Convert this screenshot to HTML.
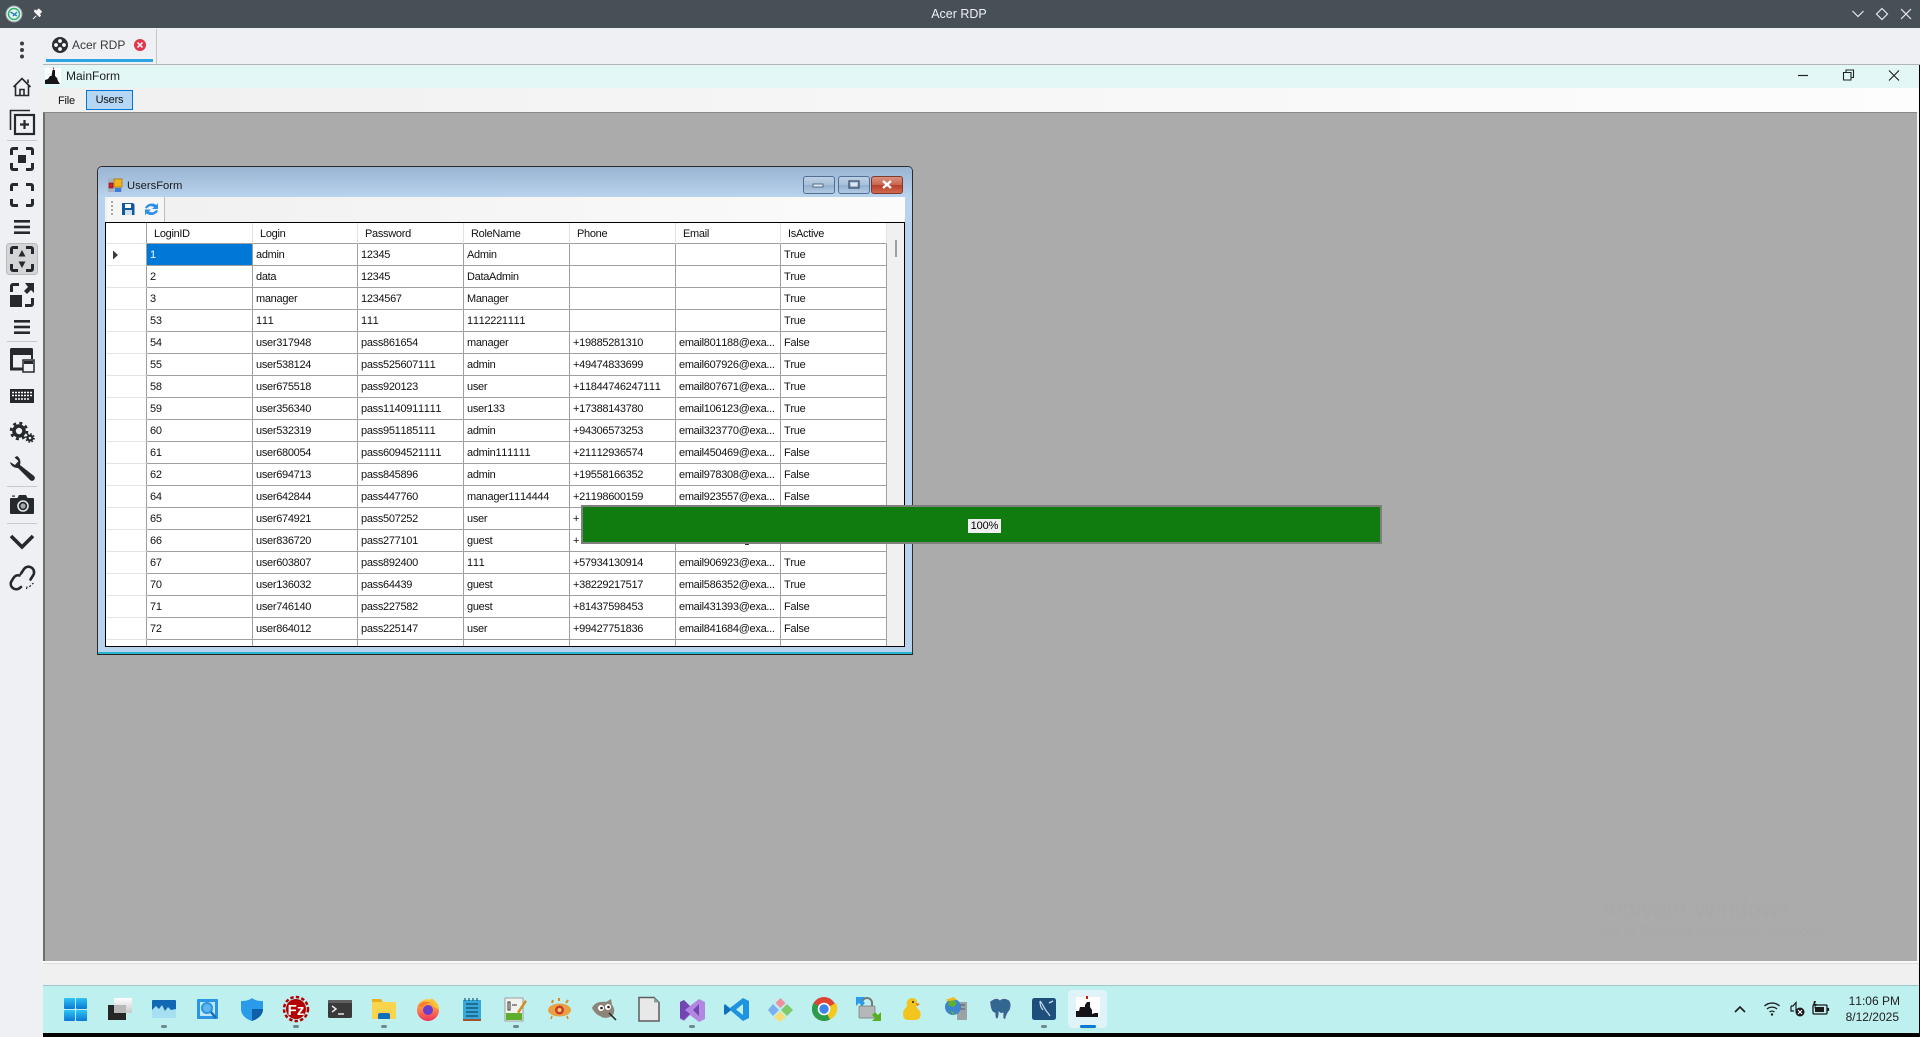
<!DOCTYPE html>
<html lang="en">
<head>
<meta charset="utf-8">
<title>Acer RDP</title>
<style>
html,body{margin:0;padding:0;width:1920px;height:1037px;overflow:hidden;background:#eef0f3;font-family:"Liberation Sans",sans-serif;color:#111;font-kerning:none}
.a{position:absolute;box-sizing:border-box}
table{border-collapse:separate;border-spacing:0;table-layout:fixed;width:781px;font-size:11px;letter-spacing:-.3px}
td,th{box-sizing:border-box;height:22px;padding:2px 0 0 3px;line-height:19px;border-right:1px solid #a0a0a0;border-bottom:1px solid #a0a0a0;font-weight:normal;text-align:left;white-space:nowrap;overflow:hidden;background:#fff;color:#111}
td:first-child,th:first-child{border-bottom:1px solid #e4e4e4;padding:0}
th{height:21px;line-height:18px;border-right:1px solid #e2e2e2;padding-left:7px}
th:first-child{border-right:1px solid #a0a0a0}
td.s{background:#0078d7;color:#fff}
td.f{height:8px}
</style>
</head>
<body>
<!-- title bar -->
<div class="a" style="left:0;top:0;width:1920px;height:28px;background:#474f57"></div>
<div class="a" style="left:859px;top:6px;width:200px;height:16px;text-align:center;color:#eef0f2;font-size:12.5px;line-height:16px">Acer RDP</div>

<!-- tab strip -->
<div class="a" style="left:43px;top:28px;width:1877px;height:36px;background:#eef0f3"></div>
<div class="a" style="left:156px;top:29px;width:1px;height:35px;background:#c4c6c8"></div>
<div class="a" style="left:46px;top:59px;width:107px;height:3px;background:#2ea4e4"></div>
<div class="a" style="left:72px;top:37px;font-size:12px;line-height:16px;color:#3a3a3a">Acer RDP</div>
<div class="a" style="left:43px;top:64px;width:1877px;height:1px;background:#b4b4b4"></div>

<!-- MainForm caption -->
<div class="a" style="left:43px;top:65px;width:1876px;height:23px;background:#e2f7f6"></div>
<div class="a" style="left:66px;top:69px;font-size:12px;line-height:15px;color:#222">MainForm</div>

<!-- menu -->
<div class="a" style="left:43px;top:88px;width:1876px;height:24px;background:linear-gradient(90deg,#f0f0f0,#fdfdfd)"></div>
<div class="a" style="left:58px;top:94px;font-size:11px;letter-spacing:-.2px;line-height:14px">File</div>
<div class="a" style="left:86px;top:90px;width:47px;height:20px;background:#b5d7f3;border:1px solid #0078d7;font-size:11px;letter-spacing:-.2px;line-height:19px;text-align:center">Users</div>

<!-- MDI client -->
<div class="a" style="left:43px;top:112px;width:1874px;height:849px;background:#ababab;border-left:2px solid #6e6e6e;border-top:1px solid #8a8a8a"></div>
<div class="a" style="left:1917px;top:112px;width:2px;height:851px;background:#f4f4f4"></div>
<div class="a" style="left:1601px;top:895px;font-size:24px;line-height:30px;color:#a9a9a9">Activate Windows</div>
<div class="a" style="left:1601px;top:923px;font-size:14.5px;line-height:18px;color:#a9a9a9">Go to Settings to activate Windows.</div>
<div class="a" style="left:43px;top:961px;width:1876px;height:2px;background:#fafafa"></div>
<div class="a" style="left:43px;top:963px;width:1876px;height:22px;background:#f0f0f0;border-top:1px solid #dcdcdc"></div>

<!-- UsersForm window -->
<div class="a" style="left:97px;top:166px;width:816px;height:489px;background:#b9d3ee;border:1px solid #2c2c2c;border-bottom-color:#222;border-radius:5px 5px 0 0;overflow:hidden">
  <div class="a" style="left:0;top:0;width:814px;height:30px;background:linear-gradient(180deg,#99b4d1,#b9d3ee)"></div>
  <div class="a" style="left:0;bottom:0;width:814px;height:2px;background:#27b4cc"></div>
</div>
<div class="a" style="left:127px;top:179px;font-size:11.2px;line-height:14px;color:#1a1a1a">UsersForm</div>
<!-- caption buttons -->
<div class="a" style="left:803px;top:176px;width:32px;height:18px;border:1px solid #4f6f94;border-radius:3px;background:linear-gradient(180deg,#bdd0e5 0,#a8c0da 50%,#93b0cf 51%,#b3cbe4 100%)"></div>
<div class="a" style="left:838px;top:176px;width:32px;height:18px;border:1px solid #4f6f94;border-radius:3px;background:linear-gradient(180deg,#bdd0e5 0,#a8c0da 50%,#93b0cf 51%,#b3cbe4 100%)"></div>
<div class="a" style="left:871px;top:176px;width:32px;height:18px;border:1px solid #80392c;border-radius:3px;background:linear-gradient(180deg,#d9917f 0,#c9654f 50%,#b73e28 51%,#cf6a4e 100%)"></div>
<!-- toolbar -->
<div class="a" style="left:105px;top:197px;width:800px;height:25px;background:linear-gradient(90deg,#f0f0f0,#fbfbfb)"></div>
<div class="a" style="left:107px;top:197px;width:58px;height:25px;background:#f6f6f6;border-radius:4px 0 0 0;border-right:1px solid #bcbcbc"></div>

<!-- grid -->
<div class="a" style="left:105px;top:222px;width:800px;height:425px;border:1px solid #000;background:#f0f0f0;overflow:hidden">
<table>
<colgroup><col style="width:41px"><col style="width:106px"><col style="width:105px"><col style="width:106px"><col style="width:106px"><col style="width:106px"><col style="width:105px"><col style="width:106px"></colgroup>
<tr><th></th><th>LoginID</th><th>Login</th><th>Password</th><th>RoleName</th><th>Phone</th><th>Email</th><th>IsActive</th></tr>
<tr><td></td><td class="s">1</td><td>admin</td><td>12345</td><td>Admin</td><td></td><td></td><td>True</td></tr>
<tr><td></td><td>2</td><td>data</td><td>12345</td><td>DataAdmin</td><td></td><td></td><td>True</td></tr>
<tr><td></td><td>3</td><td>manager</td><td>1234567</td><td>Manager</td><td></td><td></td><td>True</td></tr>
<tr><td></td><td>53</td><td>111</td><td>111</td><td>1112221111</td><td></td><td></td><td>True</td></tr>
<tr><td></td><td>54</td><td>user317948</td><td>pass861654</td><td>manager</td><td>+19885281310</td><td>email801188@exa...</td><td>False</td></tr>
<tr><td></td><td>55</td><td>user538124</td><td>pass525607111</td><td>admin</td><td>+49474833699</td><td>email607926@exa...</td><td>True</td></tr>
<tr><td></td><td>58</td><td>user675518</td><td>pass920123</td><td>user</td><td>+11844746247111</td><td>email807671@exa...</td><td>True</td></tr>
<tr><td></td><td>59</td><td>user356340</td><td>pass1140911111</td><td>user133</td><td>+17388143780</td><td>email106123@exa...</td><td>True</td></tr>
<tr><td></td><td>60</td><td>user532319</td><td>pass951185111</td><td>admin</td><td>+94306573253</td><td>email323770@exa...</td><td>True</td></tr>
<tr><td></td><td>61</td><td>user680054</td><td>pass6094521111</td><td>admin111111</td><td>+21112936574</td><td>email450469@exa...</td><td>False</td></tr>
<tr><td></td><td>62</td><td>user694713</td><td>pass845896</td><td>admin</td><td>+19558166352</td><td>email978308@exa...</td><td>False</td></tr>
<tr><td></td><td>64</td><td>user642844</td><td>pass447760</td><td>manager1114444</td><td>+21198600159</td><td>email923557@exa...</td><td>False</td></tr>
<tr><td></td><td>65</td><td>user674921</td><td>pass507252</td><td>user</td><td>+</td><td></td><td></td></tr>
<tr><td></td><td>66</td><td>user836720</td><td>pass277101</td><td>guest</td><td>+</td><td></td><td></td></tr>
<tr><td></td><td>67</td><td>user603807</td><td>pass892400</td><td>111</td><td>+57934130914</td><td>email906923@exa...</td><td>True</td></tr>
<tr><td></td><td>70</td><td>user136032</td><td>pass64439</td><td>guest</td><td>+38229217517</td><td>email586352@exa...</td><td>True</td></tr>
<tr><td></td><td>71</td><td>user746140</td><td>pass227582</td><td>guest</td><td>+81437598453</td><td>email431393@exa...</td><td>False</td></tr>
<tr><td></td><td>72</td><td>user864012</td><td>pass225147</td><td>user</td><td>+99427751836</td><td>email841684@exa...</td><td>False</td></tr>
<tr><td class="f"></td><td class="f"></td><td class="f"></td><td class="f"></td><td class="f"></td><td class="f"></td><td class="f"></td><td class="f"></td></tr>
</table>
</div>
<div class="a" style="left:895px;top:240px;width:2px;height:17px;background:#a0a0a0"></div>

<!-- progress bar -->
<div class="a" style="left:745px;top:544px;width:4px;height:1px;background:#333"></div>
<div class="a" style="left:581px;top:505px;width:801px;height:39px;background:#107c10;border:2px solid #7e807e"></div>
<div class="a" style="left:968px;top:519px;width:33px;height:14px;background:#f0f0f0;font-size:11px;letter-spacing:-.1px;line-height:15px;text-align:center;color:#000">100%</div>

<!-- taskbar -->
<div class="a" style="left:43px;top:985px;width:1876px;height:48px;background:#bdf0ef;border-top:1px solid #9fc6c6"></div>
<div class="a" style="left:43px;top:1033px;width:1877px;height:4px;background:#000"></div>
<div class="a" style="left:1919px;top:65px;width:1px;height:972px;background:#000"></div>
<div class="a" style="left:1068px;top:990px;width:39px;height:38px;background:#e0f3f8;border-radius:4px"></div>
<div class="a" style="left:1080px;top:1025px;width:16px;height:3px;background:#0078d4;border-radius:2px"></div>
<div class="a" style="left:161px;top:1025px;width:6px;height:3px;background:#6f8a8c;border-radius:2px"></div>
<div class="a" style="left:293px;top:1025px;width:6px;height:3px;background:#6f8a8c;border-radius:2px"></div>
<div class="a" style="left:381px;top:1025px;width:6px;height:3px;background:#6f8a8c;border-radius:2px"></div>
<div class="a" style="left:513px;top:1025px;width:6px;height:3px;background:#6f8a8c;border-radius:2px"></div>
<div class="a" style="left:689px;top:1025px;width:6px;height:3px;background:#6f8a8c;border-radius:2px"></div>
<div class="a" style="left:1041px;top:1025px;width:6px;height:3px;background:#6f8a8c;border-radius:2px"></div>
<div class="a" style="left:1801px;top:993px;width:99px;height:16px;text-align:right;font-size:12px;line-height:16px;color:#222">11:06 PM</div>
<div class="a" style="left:1800px;top:1009px;width:99px;height:16px;text-align:right;font-size:12px;line-height:16px;color:#222">8/12/2025</div>

<!-- all icons -->
<svg class="a" style="left:0;top:0" width="1920" height="1037" viewBox="0 0 1920 1037">
<defs>
<linearGradient id="st" x1="0" y1="0" x2="0" y2="1"><stop offset="0" stop-color="#2fc4f6"/><stop offset="1" stop-color="#0a78d4"/></linearGradient>
<linearGradient id="tv" x1="0" y1="0" x2="0" y2="1"><stop offset="0" stop-color="#fff"/><stop offset="1" stop-color="#c9c9c9"/></linearGradient>
<linearGradient id="ff" x1="0" y1="0" x2="0" y2="1"><stop offset="0" stop-color="#ffcf3a"/><stop offset="1" stop-color="#f22f5c"/></linearGradient>
</defs>

<!-- titlebar app icon + pin -->
<circle cx="14" cy="14" r="8" fill="#e8f2f4" stroke="#9aa3aa"/>
<circle cx="14" cy="14" r="5.5" fill="none" stroke="#2fb36a" stroke-width="1.5"/>
<path d="M10.5 12 17 16M17 12l-4 4" stroke="#2a7fc4" stroke-width="1.4" fill="none"/>
<path d="M33 19l3.2-3.2M34.5 11.5l5 5 1-1-1.2-1.2 2.2-2.6-2.7-2.7-2.6 2.2-1.2-1.2z" fill="#f2f3f4" stroke="#f2f3f4" stroke-width="1"/>

<!-- window controls -->
<path d="M1852.5 11l5.5 5.5 5.5-5.5" fill="none" stroke="#e8eaec" stroke-width="1.2"/>
<path d="M1882 8.5l5.5 5.5-5.5 5.5-5.5-5.5z" fill="none" stroke="#e8eaec" stroke-width="1.2"/>
<path d="M1901 9l10 10M1911 9l-10 10" fill="none" stroke="#e8eaec" stroke-width="1.2"/>
<path d="M1798 75.5h10" stroke="#222" stroke-width="1.2"/>
<path d="M1843.5 72.5h7.5v7.5h-7.5z M1846 72.5v-2.5h7.5v7.5h-2.5" fill="none" stroke="#222" stroke-width="1.1"/>
<path d="M1889 70.5l10 10M1899 70.5l-10 10" fill="none" stroke="#222" stroke-width="1.2"/>

<!-- tab icon + close -->
<circle cx="60" cy="45" r="8" fill="#2b2f33"/>
<circle cx="60" cy="41" r="1.9" fill="#fff"/><circle cx="60" cy="49" r="1.9" fill="#fff"/><circle cx="56" cy="45" r="1.9" fill="#fff"/><circle cx="64" cy="45" r="1.9" fill="#fff"/>
<circle cx="140" cy="45" r="6" fill="#e0364c"/>
<path d="M137.5 42.5l5 5M142.5 42.5l-5 5" stroke="#fff" stroke-width="1.5"/>

<!-- MainForm icon -->
<rect x="45" y="68" width="16" height="16" fill="#fff"/>
<path d="M45 84v-4l3-1 2-3h1.500l1-6h2.500v6l2 2 1 3 2 3z" fill="#16161a"/><rect x="53" y="67.5" width="1" height="2" fill="#d01818"/>

<!-- sidebar -->
<g fill="none" stroke="#25292d">
<g fill="#3a3f44" stroke="none"><circle cx="22" cy="43.5" r="2"/><circle cx="22" cy="50" r="2"/><circle cx="22" cy="56.5" r="2"/></g>
<path d="M13.500 87L22 78.500 30.500 87M15.500 85.500V95.500H28.500V85.500M20 95.500V89.500H24V95.500M28 79.500V83" stroke-width="1.600"/>
<path d="M10.500 130V110.500H30" stroke-width="1.600"/>
<rect x="15" y="115" width="19" height="19" stroke-width="2.200"/>
<path d="M24.500 120v9M20 124.500h9" stroke-width="2.200"/>
<path d="M7 140.500h30M7 341.500h30M7 486.500h30M7 523.500h30" stroke="#c6c8ca" stroke-width="1"/>
<path d="M11.500 155v-5a1.500 1.500 0 0 1 1.500-1.500h5M26 148.500h5a1.500 1.500 0 0 1 1.500 1.500v5M32.500 163v5a1.500 1.500 0 0 1-1.500 1.500h-5M18 169.500h-5a1.500 1.500 0 0 1-1.500-1.500v-5" stroke-width="3"/>
<rect x="18" y="155" width="8" height="8" fill="#25292d" stroke="none"/>
<path d="M11.500 191v-5a1.500 1.500 0 0 1 1.500-1.500h5M26 184.500h5a1.500 1.500 0 0 1 1.500 1.500v5M32.500 199v5a1.500 1.500 0 0 1-1.500 1.500h-5M18 205.500h-5a1.500 1.500 0 0 1-1.500-1.500v-5" stroke-width="3"/>
<g fill="#25292d" stroke="none"><rect x="14" y="220" width="16" height="2.600"/><rect x="14" y="225.700" width="16" height="2.600"/><rect x="14" y="231.400" width="16" height="2.600"/></g>
<rect x="6.500" y="243.500" width="31" height="31" rx="3" fill="#d4d5d7" stroke="#b9babc"/>
<path d="M11.500 254v-5a1.500 1.500 0 0 1 1.500-1.500h5M26 247.500h5a1.500 1.500 0 0 1 1.500 1.500v5M32.500 264v5a1.500 1.500 0 0 1-1.500 1.500h-5M18 270.500h-5a1.500 1.500 0 0 1-1.500-1.500v-5" stroke-width="3"/>
<path d="M22 250l3.500 6.500h-7zM22 268l3.500-6.500h-7z" fill="#25292d" stroke="none"/>
<path d="M11.500 292v-6a1.500 1.500 0 0 1 1.500-1.500h6M32.500 298v6a1.500 1.500 0 0 1-1.500 1.500h-6" stroke-width="3"/>
<rect x="10" y="295" width="12" height="12" fill="#25292d" stroke="none"/>
<path d="M34 283v10l-3-3-4 4-3-3 4-4-3-4z" fill="#25292d" stroke="none"/>
<g fill="#25292d" stroke="none"><rect x="14" y="320" width="16" height="2.600"/><rect x="14" y="325.700" width="16" height="2.600"/><rect x="14" y="331.400" width="16" height="2.600"/></g>
<path d="M11.500 354v15h11" stroke-width="3"/><rect x="10" y="348" width="23" height="7" rx="1.500" fill="#25292d" stroke="none"/><path d="M32 353v6" stroke-width="2"/>
<rect x="23" y="360" width="11" height="12" fill="#f0f1f3" stroke="#25292d" stroke-width="1.500"/><rect x="24" y="361" width="9" height="3" fill="#25292d" stroke="none"/>
<rect x="10" y="389" width="24" height="14" fill="#25292d" stroke="none"/>
<path d="M12 392.500h20M12 395.500h20M15 399h14" stroke="#fff" stroke-width="1.600" stroke-dasharray="2 1"/>
<circle cx="19" cy="431" r="5" stroke-width="3.600"/>
<circle cx="19" cy="431" r="8" stroke-width="2.600" stroke-dasharray="3 3.300"/>
<circle cx="30" cy="438" r="2.400" stroke-width="2.200"/>
<circle cx="30" cy="438" r="4" stroke-width="1.600" stroke-dasharray="1.600 1.550"/>
<path d="M17 456a7.500 7.500 0 0 1 3 9L34 476a2.600 2.600 0 0 1-4 4L18 468a7.500 7.500 0 0 1-8-6l5 3 3.500-4-4-3.500z" fill="#25292d" stroke="none"/>
<rect x="10" y="498" width="24" height="16" rx="1" fill="#25292d" stroke="none"/>
<path d="M17 499l2-4h7l2 4z" fill="#25292d" stroke="none"/><rect x="12" y="495.500" width="3" height="1.200" fill="#25292d" stroke="none"/>
<circle cx="23" cy="506" r="5" stroke="#e4e6e8" stroke-width="1.600"/><circle cx="23" cy="506" r="2.600" fill="#a5a8ab" stroke="none"/>
<path d="M11 536l11 11 11-11" stroke-width="3.600"/>
<path d="M21 573.500l3-4.500a5.500 5.500 0 0 1 9 6.500l-2.500 4M21 587l-2 1.500a5.500 5.500 0 0 1-8-6.500l2.500-4a5 5 0 0 1 6-2.500" stroke-width="2.600" stroke-linecap="round"/>
<path d="M26.500 589l.6-2.500M29.500 587l1.200-1.800M32 584l1.500-.8" stroke-width="1.200"/>
</g>

<!-- form icon and captions -->
<rect x="108" y="178" width="14" height="14" fill="#a6b2c0"/>
<rect x="114" y="179" width="8" height="8" fill="#f0b31a" stroke="#a97c10" stroke-width=".8"/>
<rect x="109" y="183" width="4" height="5" fill="#d42020" stroke="#801010" stroke-width=".6"/>
<rect x="115" y="188" width="6" height="4" fill="#3a7de0"/>
<rect x="813" y="184" width="10" height="3" fill="#dfe8f1" stroke="#3e5573" stroke-width=".8"/>
<rect x="849" y="181" width="10" height="7" fill="none" stroke="#32475f" stroke-width="1.200"/><rect x="851" y="183" width="6" height="3" fill="#dfe8f1"/>
<path d="M883 181l8 7M891 181l-8 7" stroke="#fff" stroke-width="2.400"/>

<!-- toolbar icons -->
<g fill="#aaa"><rect x="111" y="201" width="2" height="2"/><rect x="111" y="205" width="2" height="2"/><rect x="111" y="209" width="2" height="2"/><rect x="111" y="213" width="2" height="2"/></g>
<path d="M122 203h11l1.500 1.500V215H122z" fill="#125a9c"/><rect x="125" y="204" width="6" height="4" fill="#fff"/><rect x="125" y="210" width="7" height="5" fill="#cfe0ee"/>
<path d="M145 208a7 6 0 0 1 11.500-3l1.500-2v6h-6l2-1.800a4.500 4 0 0 0-7 1.300z" fill="#2c8fe8"/>
<path d="M158 210.500a7 6 0 0 1-11.500 3l-1.500 2v-6h6l-2 1.800a4.500 4 0 0 0 7-1.300z" fill="#2c8fe8"/>
<!-- row marker -->
<path d="M113 250.500l5 4.500-5 4.500z" fill="#3a3a3a"/>

<!-- taskbar icons -->
<g fill="url(#st)"><rect x="64" y="998" width="11" height="11" rx="1"/><rect x="76" y="998" width="11" height="11" rx="1"/><rect x="64" y="1010" width="11" height="11" rx="1"/><rect x="76" y="1010" width="11" height="11" rx="1"/></g>
<rect x="114" y="998" width="18" height="15" fill="url(#tv)"/><rect x="108" y="1005" width="18" height="15" fill="#262626"/><rect x="114" y="1005" width="12" height="8" fill="#b8b8b8"/>
<rect x="152" y="1000" width="24" height="18" rx="1" fill="#1169b4"/><path d="M152 1010l4-4 3 3 3-4 3 6 3-4 3 3 5-1v9h-24z" fill="#a7dff2"/>
<rect x="197" y="999" width="21" height="20" rx="1" fill="#2a95e2"/><rect x="200" y="1002" width="15" height="14" fill="#bfe6f5"/><circle cx="207" cy="1008" r="5" fill="#5fb6ea" stroke="#2a95e2" stroke-width="2"/><path d="M211 1012l5 6" stroke="#1a6fb4" stroke-width="2.500"/>
<path d="M252 998c3 2.500 7 3 11 3v8c0 6-5 10-11 12-6-2-11-6-11-12v-8c4 0 8-.5 11-3z" fill="#2a9be8"/><path d="M252 1009h11c0 6-5 10-11 12z" fill="#0f5fa8"/>
<circle cx="296" cy="1009" r="10" fill="#b30000"/><circle cx="296" cy="1009" r="12" fill="none" stroke="#b30000" stroke-width="2.500" stroke-dasharray="3.400 2.200"/>
<text x="296" y="1015" text-anchor="middle" font-family="Liberation Sans,sans-serif" font-size="15" font-weight="700" fill="#fff">Fz</text>
<rect x="328" y="1000" width="24" height="18" rx="1.500" fill="#3a3a3a"/><rect x="328" y="1000" width="24" height="3" fill="#5f5f5f"/><path d="M332 1006l4 3-4 3" fill="none" stroke="#e6e6e6" stroke-width="1.500"/><path d="M338 1014h6" stroke="#e6e6e6" stroke-width="1.500"/>
<path d="M372 999h9l2 3h13v17h-24z" fill="#e8b21c"/><rect x="372" y="1002" width="24" height="17" fill="#fbd44e"/><path d="M378 1019v-4a2 2 0 0 1 2-2h8a2 2 0 0 1 2 2v4z" fill="#0f6fbd"/>
<circle cx="428" cy="1010" r="11" fill="url(#ff)"/><path d="M431 998c5 3 8 7 8 12l-6-4z" fill="#ffc233"/><circle cx="428" cy="1010" r="5" fill="#6a3cc8"/><path d="M418 1006c4-5 9-5 13-3-4 0-7 1-8 4z" fill="#ff7a2a"/>
<rect x="463" y="1000" width="18" height="20" fill="#38a8d8"/><path d="M466 1004h12M466 1008h12M466 1012h12M466 1016h12" stroke="#14587c" stroke-width="1.400"/><rect x="463" y="1019" width="18" height="2" fill="#a5532a"/><path d="M465 998v3M469 998v3M473 998v3M477 998v3" stroke="#14587c" stroke-width="1.200"/>
<rect x="505" y="998" width="18" height="23" fill="#f1f2ee" stroke="#8a8a8a" stroke-width=".8"/><rect x="506" y="1013" width="16" height="7" fill="#5cae2c"/><path d="M508 1002h2v8h-2zM512 1005h5" stroke="#333" stroke-width="1" fill="none"/><path d="M517 1012l8-12 2 1.500-8 12z" fill="#d48a28"/>
<ellipse cx="559.500" cy="1010" rx="11.500" ry="6.500" fill="#e8a040"/><circle cx="559.500" cy="1010" r="4.500" fill="#c83a28"/><circle cx="559.500" cy="1010" r="2" fill="#f4c870"/><path d="M552 1003l1-3M559 1001v-3M566 1003l2-3" stroke="#d88a28" stroke-width="2"/><path d="M552 1016l-1 3M567 1016l1 3" stroke="#d88a28" stroke-width="1.500"/>
<path d="M592 1008c2-5 8-7 14-6l5-3 1 6c3 3 3 8 0 11-4 2-8 3-12 0-3-1-6-4-8-8z" fill="#8c8478"/><circle cx="601" cy="1008" r="3" fill="#fff"/><circle cx="608" cy="1007" r="3" fill="#fff"/><circle cx="601.500" cy="1008" r="1.300" fill="#222"/><circle cx="608.500" cy="1007" r="1.300" fill="#222"/><path d="M609 1013l7 7" stroke="#222" stroke-width="1.500"/>
<path d="M639 997.500h15l5 5v18.500h-20z" fill="#e8e8e8" stroke="#5c5c5c" stroke-width="1.500"/><path d="M654 997.500l5 5h-5z" fill="#8aa0a0"/>
<path d="M680 1002l4-2 6 6 9-7 6 3v17l-6 3-9-7-6 6-4-2z" fill="#b287e0"/><path d="M680 1002l4-2 6 6-5 4 5 4-6 6-4-2zM699 1004l-6 6 6 6z" fill="#7246b0"/>
<path d="M743 998l6 3v17l-6 3-13-11-5 4-1-1v-8l1-1 5 4zM743 1004l-7 5.500 7 5.500z" fill="#1e93e0" fill-rule="evenodd"/><path d="M724 1006l1-1 5 4 1 1-1 1-5 4-1-1z" fill="#0f6fb8"/>
<path d="M780.500 998l5 5-5 5-5-5z" fill="#ef8fa0"/><path d="M787 1004l6 6-6 6-6-6z" fill="#7ccb6a"/><path d="M780 1011l6 6-6 5-6-5z" fill="#f8dc7a"/><path d="M773 1004l6 6-6 6-5-6z" fill="#7caef0"/>
<circle cx="824" cy="1009" r="12" fill="#dc4436"/><path d="M824 1009l-10.400-6a12 12 0 0 0 4.400 16.400z" fill="#2a9c4c"/><path d="M824 1009l6 10.400a12 12 0 0 0 6-16.400z" fill="#f6c81e"/><path d="M824 1009l6 10.400a12 12 0 0 1-12 0z" fill="#2a9c4c"/><circle cx="824" cy="1009" r="5.500" fill="#3d83e8" stroke="#fff" stroke-width="1.600"/>
<rect x="859" y="1006" width="16" height="12" rx="1" fill="#b4b8b8" stroke="#777" stroke-width=".7"/><path d="M862 1006v-3a5 5 0 0 1 10 0v3" fill="none" stroke="#777" stroke-width="2"/><path d="M856 997h9l-3 3 3 3-3 3-3-3-3 3z" fill="#2a9ce8"/><path d="M881 1021h-9l3-3-3-3 3-3 3 3 3-3z" fill="#56b020"/>
<path d="M912 998c4 0 6 3 5 7-1 3 0 3 2 5 3 4 2 9-3 10h-9c-4-1-5-6-3-10l3-4c-1-4 1-8 5-8z" fill="#f2c41e"/><circle cx="913" cy="1002" r="1" fill="#222"/><path d="M916 1003l4 1-3 2z" fill="#e86a1a"/>
<rect x="957" y="1002" width="10" height="18" fill="#9ba2a6"/><path d="M959 1005h6M959 1009h6" stroke="#555"/><circle cx="953" cy="1007" r="8" fill="#3a84d0"/><path d="M948 1002c3-2 7-2 9 1l-3 4-5-1zM950 1010l5 3-2 2z" fill="#5db030"/><path d="M945 1000l9-3 3 3-8 1z" fill="#f0b81e"/>
<path d="M992 1000c3-2 6-2 8 0 2-2 6-2 9 0 3 3 2 7 1 10-2 2-3 4-4 7 0 3-3 3-3 0v-4c-2 1-3 0-4-1 0 3 0 6-2 7-2 0-2-3-2-6-3 0-5-5-5-10-1-1 0-2 2-3z" fill="#336791" stroke="#d8e4ee" stroke-width=".8"/>
<rect x="1032" y="998" width="24" height="22" rx="2.500" fill="#1e4f7c"/><path d="M1040 1001c3 3 4 8 8 12l2 3M1040 1001c0 4 1 7 3 9" fill="none" stroke="#c8dce8" stroke-width="1.200"/><path d="M1049 1003l4-2" stroke="#c8dce8" stroke-width="1.500"/>
<rect x="1076" y="997" width="24" height="20" fill="#fff"/><path d="M1076 1017v-6h3l1-4h5v-2l2-3h3v5l2 3v4l3-1h3v4z" fill="#141418"/><rect x="1086" y="996" width="2" height="3" fill="#d01818"/>

<!-- tray -->
<path d="M1735 1012l5-5 5 5" fill="none" stroke="#1a1a1a" stroke-width="1.600"/>
<g fill="none" stroke="#1a1a1a" stroke-width="1.300"><path d="M1764.500 1006a11 11 0 0 1 15 0"/><path d="M1767 1009a7.500 7.500 0 0 1 10 0"/><path d="M1769.500 1012a4 4 0 0 1 5 0"/></g><circle cx="1772" cy="1014.500" r="1.200" fill="#1a1a1a"/>
<path d="M1791 1006h2l3-3.500v9" fill="none" stroke="#1a1a1a" stroke-width="1.200"/><path d="M1791 1006v5h3" fill="none" stroke="#1a1a1a" stroke-width="1.200"/>
<circle cx="1800" cy="1012" r="4.500" fill="#1a1a1a"/><path d="M1798 1010l4 4M1802 1010l-4 4" stroke="#fff" stroke-width="1.100"/>
<rect x="1813" y="1005" width="14" height="9" rx="1" fill="#bdf0ef" stroke="#1a1a1a" stroke-width="1.300"/><rect x="1815" y="1007" width="9" height="5" fill="#1a1a1a"/><rect x="1827.500" y="1008" width="1.600" height="3" fill="#1a1a1a"/><path d="M1814 1001l-1 4h2l-1 4 3-5h-2l1-3z" fill="#1a1a1a"/>
</svg>
</body>
</html>
